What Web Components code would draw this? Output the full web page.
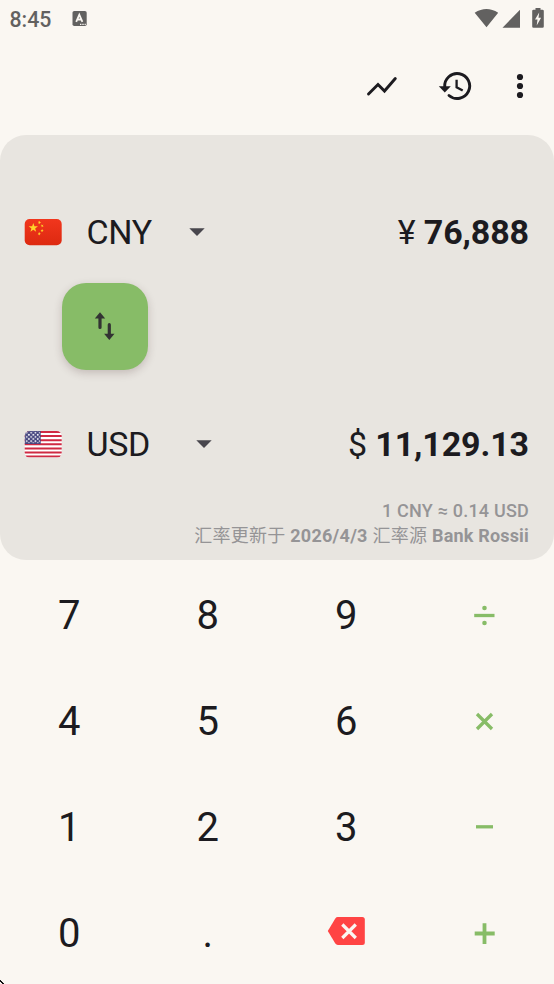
<!DOCTYPE html>
<html lang="zh-CN">
<head>
<meta charset="utf-8">
<meta name="viewport" content="width=device-width">
<title>Currency converter</title>
<style>
html,body{margin:0;height:100%;background:#faf7f2;overflow:hidden}
body{font-family:Roboto,"Noto Sans CJK SC",sans-serif;color:#1c1b20}
</style>
</head>
<body>
<currency-app></currency-app>
<script>
const define = (name, html) => {
  const t = document.createElement('template');
  t.innerHTML = html;
  customElements.define(name, class extends HTMLElement {
    constructor() {
      super();
      this.attachShadow({mode: 'open'}).appendChild(t.content.cloneNode(true));
    }
  });
};

define('status-bar', `
<style>
:host{display:flex;height:38px;box-sizing:border-box;align-items:center;padding:0 8px 0 9.500px;color:#626160}
.time{font-size:21.300px;font-weight:500;line-height:36px;padding-top:2px;width:62.500px}
svg{display:block}
.right{margin-left:auto}
</style>
<span class="time">8:45</span>
<svg width="16" height="18" viewBox="0 0 16 18" fill="none"><rect x=".5" y="1" width="14.200" height="15" rx="1.800" fill="#626160"/><path d="M4.200 11.800 7.300 4.700 10.400 11.800M5.400 9.500h3.800" stroke="#faf7f2" stroke-width="1.800"/><path d="M8 14.300h1.400M10.300 14.300h1.400M12.600 14.300h1.200" stroke="#faf7f2" stroke-width="1.200"/></svg>
<svg class="right" width="72" height="22" viewBox="474 8 72 22"><path fill="#626160" d="M474.700 12.700Q486.400 5.200 498.200 12.700L486.500 27.300ZM520 9.800V27.700H502.500ZM535.500 8h5v1.800h2q1.300 0 1.300 1.300v15.300q0 1.300-1.300 1.300h-9q-1.300 0-1.300-1.300V11.100q0-1.300 1.300-1.300h2Z"/><path fill="#faf7f2" d="M539.200 12.500 535 19.500h2.500l-.8 6 4.400-7.800h-2.600Z"/></svg>
`);

define('top-bar', `
<style>
:host{display:flex;height:97px;box-sizing:border-box;padding:26px 22px 0 0;justify-content:flex-end}
svg{display:block}
</style>
<svg width="170" height="44" viewBox="362 64 170 44" fill="none" stroke="#1c1b20" stroke-width="2.900"><path d="M368.500 94 378 84.500 384.500 91 395.300 78.500" stroke-linecap="round"/><path d="M444.700 87A12.500 12.500 0 1 1 449 95.500" stroke-linecap="round"/><path d="M456.600 79.800V87.200L462.700 90.600" stroke-width="2.300"/><path d="M438.800 86.200H450.800L444.800 92.400Z" fill="#1c1b20" stroke="none"/><g fill="#1c1b20" stroke="none"><circle cx="520" cy="77" r="3.100"/><circle cx="520" cy="86" r="3.100"/><circle cx="520" cy="95" r="3.100"/></g></svg>
`);

define('flag-cn', `
<style>:host{display:block;white-space:normal}svg{display:block}</style>
<svg width="38" height="28" viewBox="24 218.200 38 28"><defs><linearGradient id="g" x2="0" y2="1"><stop stop-color="#f1361d"/><stop offset="1" stop-color="#dd2910"/></linearGradient>
<path id="s" d="M0-1 .235-.324.951-.309.38.124.588.809 0 .4-.588.809-.38.124-.951-.309-.235-.324Z"/></defs>
<rect x="24.700" y="219.200" width="37" height="26.300" rx="5" fill="url(#g)"/><g fill="#ffd429"><use href="#s" transform="translate(33.300 228)scale(4.900)"/><use href="#s" transform="translate(39.400 222.700)rotate(20)scale(1.800)"/><use href="#s" transform="translate(42.200 226)rotate(45)scale(1.700)"/><use href="#s" transform="translate(42.100 230.700)scale(1.700)"/><use href="#s" transform="translate(39.300 234)rotate(20)scale(1.800)"/></g></svg>
`);

define('flag-us', `
<style>:host{display:block;white-space:normal}svg{display:block}</style>
<svg width="38" height="28" viewBox="24 430.200 38 28"><defs><clipPath id="c"><rect x="24.700" y="431.200" width="37" height="26.600" rx="5"/></clipPath>
<pattern id="p" x="25.500" y="431.800" width="4.400" height="4.200" patternUnits="userSpaceOnUse"><circle cx="1.200" cy="1.100" r=".95" fill="#fff"/><circle cx="3.400" cy="3.200" r=".95" fill="#fff"/></pattern></defs>
<g clip-path="url(#c)"><rect x="24" y="431" width="38" height="27" fill="#fff"/><path stroke="#cf2a43" stroke-width="2.050" d="M24 432.200h38M24 436.300h38M24 440.400h38M24 444.500h38M24 448.600h38M24 452.700h38M24 456.800h38"/><rect x="24.500" y="431" width="16.200" height="13.200" fill="#46467f"/><rect x="25.500" y="431.800" width="14.500" height="11.500" fill="url(#p)"/></g></svg>
`);

define('currency-row', `
<style>
:host{display:flex;height:48px;align-items:center;font-size:34px;line-height:48px;white-space:pre}
.code{margin-left:24.500px;letter-spacing:-.35px}
svg{display:block;margin-left:var(--arrow-gap,37px)}
.amount{margin-left:auto;letter-spacing:-.12px}
::slotted(b){font-weight:700}
</style>
<slot name="flag"></slot><span class="code"><slot name="code"></slot></span>
<svg width="16" height="8" viewBox="0 0 16 8"><path d="M.3.300h15.400L8 7.900Z" fill="#48464d"/></svg>
<span class="amount"><slot></slot></span>
`);

define('swap-button', `
<style>
:host{display:flex;width:86.500px;height:86.500px;border-radius:24px;background:#87bc67;box-shadow:0 3px 8px rgba(70,40,40,.22);align-items:center;justify-content:center}
svg{display:block}
</style>
<svg width="24" height="32" viewBox="93 310.500 24 32" fill="none" stroke="#333" stroke-width="3.200" stroke-linecap="round"><path d="M100 328V318M109.300 325.200V335"/><path fill="#333" stroke="none" d="M94.800 319 100 312.700 105.200 319ZM104.100 334.200 109.300 340.500 114.500 334.200Z"/></svg>
`);

define('rate-info', `
<style>
:host{display:block;text-align:right;font-size:18px;line-height:25px;letter-spacing:.27px;color:#959496;white-space:nowrap}
.rate{font-weight:500;letter-spacing:.2px}
.source{font-weight:400}
b{font-weight:700}
.bank{letter-spacing:.18px}
</style>
<div class="rate">1 CNY ≈ 0.14 USD</div><div class="source">汇率更新于 <b>2026/4/3</b> 汇率源 <b class="bank">Bank Rossii</b></div>
`);

define('converter-card', `
<style>
:host{display:flex;flex-direction:column;height:424.500px;box-sizing:border-box;padding:73px 25px 0 24px;border-radius:26px;background:#e8e5e0}
swap-button{margin:27px 0 0 37.500px}
.to{margin-top:50.500px;--arrow-gap:46px}
rate-info{margin-top:30px}
</style>
<currency-row><flag-cn slot="flag"></flag-cn><span slot="code">CNY</span>¥ <b>76,888</b></currency-row>
<swap-button></swap-button>
<currency-row class="to"><flag-us slot="flag"></flag-us><span slot="code">USD</span>$ <b>11,129.13</b></currency-row>
<rate-info></rate-info>
`);

define('pad-key', `
<style>:host{display:flex;align-items:center;justify-content:center;font-size:40px;line-height:48px}::slotted(svg){display:block}</style><slot></slot>
`);

define('key-pad', `
<style>
:host{display:grid;grid-template-columns:repeat(4,1fr);grid-template-rows:repeat(4,106.100px);padding-top:3.200px}
.op{stroke:#87bc67;stroke-width:3.300;fill:none}
</style>
<pad-key>7</pad-key><pad-key>8</pad-key><pad-key>9</pad-key>
<pad-key><svg class="op" width="24" height="24" viewBox="-11.500 -11.500 24 24"><path d="M-10.300 0H10"/><g fill="#87bc67" stroke="none"><circle cy="-7.500" r="2.300"/><circle cy="7.500" r="2.300"/></g></svg></pad-key>
<pad-key>4</pad-key><pad-key>5</pad-key><pad-key>6</pad-key>
<pad-key><svg class="op" width="24" height="24" viewBox="-11.500 -11.500 24 24"><path d="M-7.500-7.500 7.500 7.500M7.500-7.500-7.500 7.500"/></svg></pad-key>
<pad-key>1</pad-key><pad-key>2</pad-key><pad-key>3</pad-key>
<pad-key><svg class="op" width="24" height="24" viewBox="-11.500 -11.500 24 24"><path d="M-8.500-.700H8.500"/></svg></pad-key>
<pad-key>0</pad-key><pad-key>.</pad-key>
<pad-key><svg width="38" height="34" viewBox="327.200 917 38 34" overflow="visible"><path fill="#ff4444" d="M338 917H362.500Q365 917 365 919.500V942.500Q365 945 362.500 945H338Q336.500 945 335.500 943.600L328 931 335.500 918.400Q336.500 917 338 917Z"/><path stroke="#faf7f2" stroke-width="3.200" d="M342.500 924.500 356 938M356 924.500 342.500 938"/></svg></pad-key>
<pad-key><svg class="op" width="24" height="24" viewBox="-11.500 -11.500 24 24" style="stroke-width:3.800"><path d="M-9.800 0H10.200M0-10.200V10.600"/></svg></pad-key>
`);

define('currency-app', `
<style>
:host{display:block;position:relative;height:984px;background:#faf7f2;overflow:hidden}
.corner{position:absolute;left:0;bottom:0;display:block}
</style>
<status-bar></status-bar><top-bar></top-bar><converter-card></converter-card><key-pad></key-pad>
<svg class="corner" width="4" height="4"><path d="M0 0h1v1h1v1h1v1h1v1H2V3H1V2H0Z" fill="#111"/></svg>
`);
</script>
</body>
</html>
